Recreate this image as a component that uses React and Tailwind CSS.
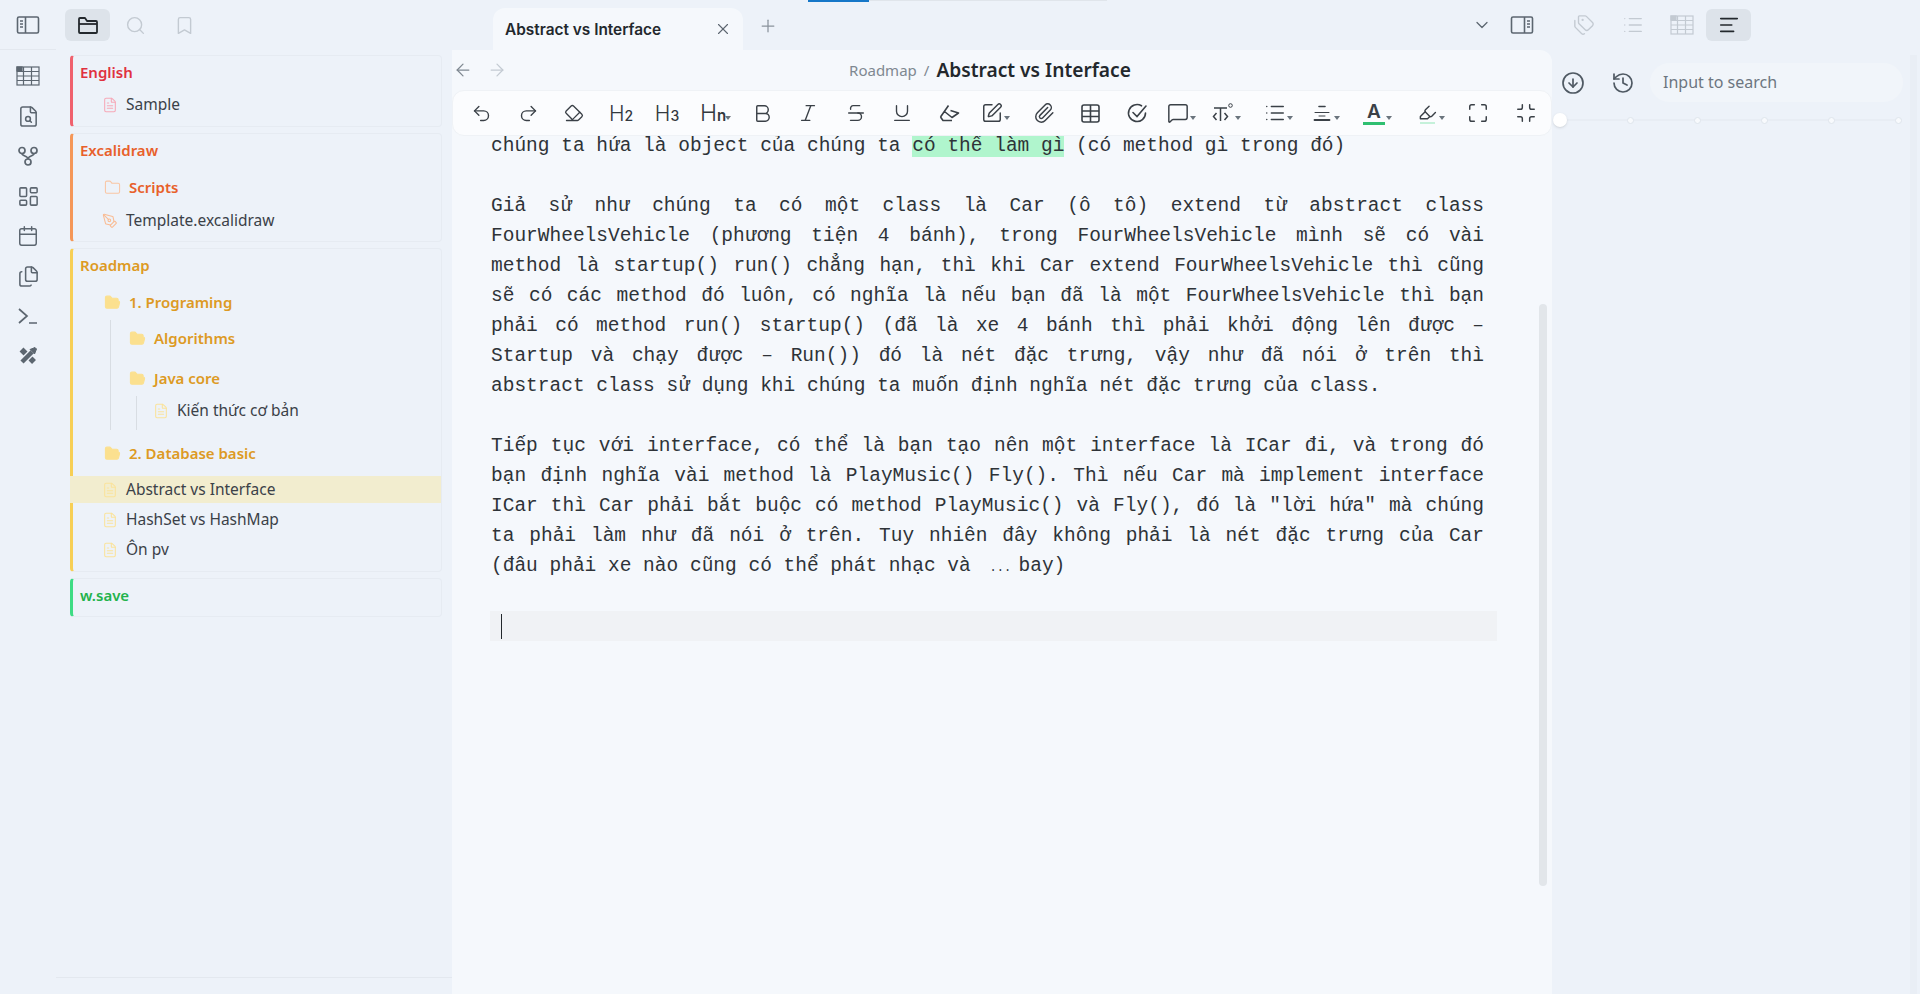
import {
  Undo2, Redo2, Eraser, Bold, Italic, Strikethrough, Underline,
  SquarePen, Paperclip, MessageSquare, List, Highlighter,
  Maximize, Minimize, Folder, FolderOpen, FileText, Search, Bookmark, X, Plus, ChevronDown,
  ArrowLeft, ArrowRight, Tags, LayoutDashboard, Calendar, Files, FileSearch, PenTool,
  CircleArrowDown, History, Text as TextIcon,
} from "lucide-react";

const ui = "font-['Noto_Sans',sans-serif]";

function SheetIcon({ className }) {
  return (
    <svg width="24" height="20" viewBox="0 0 24 20" fill="none" stroke="currentColor" strokeWidth="1.2" className={className}>
      <rect x="1" y="1" width="22" height="18" />
      <rect x="1" y="1" width="5" height="4" fill="currentColor" />
      <path d="M1 5.5h22M1 10h22M1 14.5h22M7.5 1v18M15.5 1v18" />
    </svg>
  );
}

function PanelIcon({ right }) {
  return (
    <svg width="24" height="20" viewBox="0 0 24 20" fill="none" stroke="currentColor" strokeWidth="1.6" className={right ? "-scale-x-100" : ""}>
      <rect x="1.5" y="2" width="21" height="16" rx="1.5" />
      <path d="M9.5 2v16M4 6h3M4 9h3M4 12h3" />
    </svg>
  );
}

function GraphIcon() {
  return (
    <svg width="22" height="22" viewBox="0 0 22 22" fill="none" stroke="currentColor" strokeWidth="1.7">
      <circle cx="5" cy="5.5" r="3" />
      <circle cx="17" cy="5.5" r="3" />
      <circle cx="11" cy="17" r="3" />
      <path d="M5 8.5c0 3 6 2 6 5.5M17 8.5c0 3-6 2-6 5.5" />
    </svg>
  );
}

function ToolsIcon() {
  return (
    <svg width="20" height="20" viewBox="0 0 20 20" fill="none" stroke="currentColor">
      <path d="M3.5 3.5L16 16" strokeWidth="5.5" />
      <path d="M4 16L14 6" strokeWidth="7" stroke="#edf2f9" />
      <path d="M4 16L14 6" strokeWidth="4.5" />
      <path d="M12 3.5l5-2 1.5 1.5-2 5z" fill="currentColor" strokeWidth="1" />
    </svg>
  );
}

function TerminalIcon() {
  return (
    <svg width="22" height="20" viewBox="0 0 22 20" fill="none" stroke="currentColor" strokeWidth="1.7">
      <path d="M2 3l8 7-8 7M12 17h8" />
    </svg>
  );
}

function TextCodeIcon() {
  return (
    <svg width="22" height="22" viewBox="0 0 22 22" fill="none" stroke="currentColor" strokeWidth="1.5">
      <path d="M2 6h13M8.500 6v13M4.500 11l-3 3.500 3 3.500M12.500 11l3 3.500-3 3.500" />
      <circle cx="18.500" cy="3.500" r="1.800" strokeWidth="1" />
    </svg>
  );
}

function InkIcon() {
  return (
    <svg width="21" height="18" viewBox="0 0 21 18" fill="none" stroke="currentColor" strokeWidth="1.6" strokeLinejoin="round">
      <path d="M1.500 13L9.500 1.500M5.500 7.500l7.500 6 6.500-4.500-8-2.500M1.500 13l2.500 3.500h9" />
    </svg>
  );
}

function GridIcon() {
  return (
    <svg width="19" height="19" viewBox="0 0 19 19" fill="none" stroke="currentColor" strokeWidth="1.6">
      <rect x="1" y="1" width="17" height="17" rx="2" />
      <path d="M9.500 1v17M1 7h17M1 12.500h17" />
    </svg>
  );
}

function AlignIcon() {
  return (
    <svg width="18" height="18" viewBox="0 0 18 18" fill="none" stroke="currentColor" strokeLinecap="round">
      <path d="M6 2.500h6" strokeWidth="1.600" />
      <path d="M2 8.500h14" strokeWidth="1" />
      <path d="M6 12h6" strokeWidth="1" />
      <path d="M1.500 16h15" strokeWidth="1.800" />
    </svg>
  );
}

function CheckIcon() {
  return (
    <svg width="22" height="22" viewBox="0 0 22 22" fill="none" stroke="currentColor" strokeWidth="1.6" strokeLinecap="round">
      <path d="M19.500 11a8.500 8.500 0 1 1-4-7.200M7 10.500l4 4L20 4" />
    </svg>
  );
}

function Caret() {
  return <span className="block w-0 h-0 border-x-[3px] border-x-transparent border-t-[4px] border-t-[#6a747d]" />;
}

function HeadingMark({ sub, big }) {
  return (
    <span className="font-['Inter',sans-serif] flex items-baseline leading-none text-[#33393f]">
      <span className={big ? "text-[23px] font-light" : "text-[21px] font-light"}>H</span>
      <span className={big ? "text-[15px] font-semibold" : "text-[14px] font-medium"}>{sub}</span>
    </span>
  );
}

const tools = [
  { ic: <Undo2 size={21} strokeWidth={1.6} />, ml: "ml-0" },
  { ic: <Redo2 size={21} strokeWidth={1.6} />, ml: "ml-[23px]" },
  { ic: <Eraser size={20} strokeWidth={1.6} className="-scale-x-100" />, ml: "ml-[22px]" },
  { ic: <HeadingMark sub="2" />, ml: "ml-[23px]" },
  { ic: <HeadingMark sub="3" />, ml: "ml-[22px]" },
  { ic: <HeadingMark sub="n" big />, ml: "ml-[22px]", caret: true },
  { ic: <Bold size={23} strokeWidth={1.5} />, ml: "ml-[25px]" },
  { ic: <Italic size={22} strokeWidth={1.5} />, ml: "ml-[22px]" },
  { ic: <Strikethrough size={22} strokeWidth={1.5} />, ml: "ml-[24px]" },
  { ic: <Underline size={22} strokeWidth={1.5} />, ml: "ml-[22px]" },
  { ic: <InkIcon />, ml: "ml-[23px]" },
  { ic: <SquarePen size={22} strokeWidth={1.6} />, ml: "ml-[19px]", caret: true },
  { ic: <Paperclip size={22} strokeWidth={1.6} />, ml: "ml-[28px]" },
  { ic: <GridIcon />, ml: "ml-[22px]" },
  { ic: <CheckIcon />, ml: "ml-[23px]" },
  { ic: <MessageSquare size={22} strokeWidth={1.6} />, ml: "ml-[17px]", caret: true },
  { ic: <TextCodeIcon />, ml: "ml-[21px]", caret: true },
  { ic: <List size={22} strokeWidth={1.6} />, ml: "ml-[28px]", caret: true },
  { ic: <AlignIcon />, ml: "ml-[23px]", caret: true },
  {
    ic: (
      <span className="flex flex-col items-center leading-none">
        <span className="font-['Inter',sans-serif] text-[19px] font-semibold leading-[20px]">A</span>
        <span className="w-[22px] h-[3px] bg-[#2fbf71]" />
      </span>
    ),
    ml: "ml-[28px]",
    caret: true,
  },
  {
    ic: (
      <span className="flex flex-col items-center">
        <Highlighter size={19} strokeWidth={1.8} />
        <span className="w-[15px] h-[2px] bg-[#c5f1da]" />
      </span>
    ),
    ml: "ml-[29px]",
    caret: true,
  },
  { ic: <Maximize size={22} strokeWidth={1.6} />, ml: "ml-[27px]" },
  { ic: <Minimize size={22} strokeWidth={1.6} />, ml: "ml-[24px]" },
];

function FileRow({ icon: Icon = FileText, color, name, pl, h = "h-[30px]", active }) {
  return (
    <div className={`flex items-center gap-[8px] text-[15.5px] text-[#3b4148] ${pl} ${h} ${active ? "-ml-[3px] bg-[#f2edcf]" : ""}`}>
      <Icon size={16} strokeWidth={1.6} className={color} />
      <span>{name}</span>
    </div>
  );
}

function FolderRow({ icon: Icon = FolderOpen, iconClass, name, text, pl, h = "h-[37px]", extra = "" }) {
  return (
    <div className={`flex items-center gap-2 text-[15px] font-semibold ${text} ${pl} ${h} ${extra}`}>
      <Icon size={17} strokeWidth={1.5} className={iconClass} />
      <span>{name}</span>
    </div>
  );
}

function Card({ bar, title, color, children }) {
  return (
    <div className={`rounded-[4px] border border-[#e6ebf2] border-l-[3px] ${bar} mb-[6px]`}>
      <div className={`h-[34px] pb-[2px] flex items-center pl-[7px] text-[15px] font-semibold ${color}`}>{title}</div>
      {children}
    </div>
  );
}

export default function App() {
  const yellowFolder = "text-[#fbe08f] fill-[#fbe08f]";
  return (
    <div className={`${ui} relative w-full h-[994px] overflow-hidden flex bg-[#edf2f9] text-[#2e3338]`}>
      {/* progress strip */}
      <div className="absolute top-0 left-[808px] w-[61px] h-[2px] bg-[#1677c8]" />
      <div className="absolute top-0 left-[869px] w-[238px] h-[1px] bg-[#e0e5eb]" />

      {/* ribbon */}
      <div className="w-[56px] shrink-0 text-[#5c6670]">
        <div className="h-[50px] border-b border-[#e3e8ef] flex items-center justify-center"><PanelIcon /></div>
        <div className="flex flex-col items-center pt-[6px]">
          {[
            <SheetIcon />,
            <FileSearch size={23} strokeWidth={1.6} />,
            <GraphIcon />,
            <LayoutDashboard size={23} strokeWidth={1.6} />,
            <Calendar size={22} strokeWidth={1.6} />,
            <Files size={23} strokeWidth={1.6} />,
            <TerminalIcon />,
            <ToolsIcon />,
          ].map((ic, i) => (
            <div key={i} className="h-10 flex items-center justify-center">{ic}</div>
          ))}
        </div>
      </div>

      {/* file sidebar */}
      <div className="w-[396px] shrink-0 relative">
        <div className="h-[50px] flex items-start pt-[9px] pl-[9px] text-[#c3cad2]">
          <div className="w-[45px] h-8 rounded-md bg-[#dde3ea] flex items-center justify-center text-[#23282d]">
            <FolderClosedIcon />
          </div>
          <div className="w-[49px] h-8 ml-[1px] flex items-center justify-center"><Search size={21} strokeWidth={1.6} /></div>
          <div className="w-[49px] h-8 flex items-center justify-center"><Bookmark size={21} strokeWidth={1.6} /></div>
        </div>
        <div className="pt-[5px] pl-[14px] pr-[10px]">
          <Card bar="border-l-[#f0616d]" title="English" color="text-[#e0313f]">
            <FileRow color="text-[#f6a9b8]" name="Sample" pl="pl-[29px]" />
            <div className="h-[6px]" />
          </Card>
          <Card bar="border-l-[#f59758]" title="Excalidraw" color="text-[#e8602a]">
            <FolderRow icon={Folder} iconClass="text-[#f9c6a4]" name="Scripts" text="text-[#e8602a]" pl="pl-[31px]" h="h-[38px]" />
            <FileRow icon={PenTool} color="text-[#f9bc94]" name="Template.excalidraw" pl="pl-[29px]" />
            <div className="h-[5px]" />
          </Card>
          <Card bar="border-l-[#f7cf55]" title="Roadmap" color="text-[#dd9a24]">
            <FolderRow iconClass={yellowFolder} name="1. Programing" text="text-[#dd9a24]" pl="pl-[31px]" extra="mt-[1px]" />
            <div className="ml-[37px] -mt-[1px] border-l border-[#d8dde3]">
              <FolderRow iconClass={yellowFolder} name="Algorithms" text="text-[#dd9a24]" pl="pl-[18px]" />
              <FolderRow iconClass={yellowFolder} name="Java core" text="text-[#dd9a24]" pl="pl-[18px]" h="h-[36px]" extra="mt-[3px]" />
              <div className="ml-[25px] border-l border-[#d8dde3] pb-[4px]">
                <FileRow color="text-[#fae39c]" name="Kiến thức cơ bản" pl="pl-[16px]" />
              </div>
            </div>
            <FolderRow iconClass={yellowFolder} name="2. Database basic" text="text-[#dd9a24]" pl="pl-[31px]" extra="mt-[5px]" />
            <div className="mt-[4px]">
              <FileRow color="text-[#fae39c]" name="Abstract vs Interface" pl="pl-[32px]" h="h-[27px]" active />
            </div>
            <div className="mt-[2px]">
              <FileRow color="text-[#fae39c]" name="HashSet vs HashMap" pl="pl-[29px]" />
              <FileRow color="text-[#fae39c]" name="Ôn pv" pl="pl-[29px]" />
            </div>
            <div className="h-[6px]" />
          </Card>
          <Card bar="border-l-[#3edc84]" title="w.save" color="text-[#22b24c]">
            <div className="h-[3px]" />
          </Card>
        </div>
        <div className="absolute left-0 right-0 top-[977px] h-px bg-[#e3e8ef]" />
      </div>

      {/* main editor */}
      <div className="w-[1100px] shrink-0 flex flex-col">
        <div className="h-[50px] shrink-0 flex items-end pl-[41px] pr-[18px]">
          <div className="w-[250px] h-[42px] rounded-t-xl bg-[#f5f8fc] flex items-center justify-between pl-3 pr-[11px]">
            <span className="font-['Inter',sans-serif] text-[15.4px] font-semibold text-[#23282d] pt-[1px]">Abstract vs Interface</span>
            <X size={18} strokeWidth={1.5} className="text-[#5c6670]" />
          </div>
          <div className="ml-[15px] h-[42px] flex items-start pt-[8px] text-[#8a939c]"><Plus size={20} strokeWidth={1.5} /></div>
          <div className="ml-auto h-full flex items-center gap-[18px] text-[#5c6670]">
            <ChevronDown size={20} strokeWidth={1.5} />
            <PanelIcon right />
          </div>
        </div>
        <div className="flex-1 min-h-0 relative bg-[#f5f8fc] rounded-tr-xl flex flex-col">
          <div className="h-10 shrink-0 relative flex items-center justify-center pr-[24px]">
            <div className="absolute left-[1px] flex items-center gap-[14px]">
              <ArrowLeft size={20} strokeWidth={1.5} className="text-[#7f8891]" />
              <ArrowRight size={20} strokeWidth={1.5} className="text-[#c3cad2]" />
            </div>
            <span className="text-[15px] text-[#7f8891]">Roadmap</span>
            <span className="text-[15px] text-[#7f8891] mx-[7px]">/</span>
            <span className="text-[19.2px] font-semibold text-[#23282d]">Abstract vs Interface</span>
          </div>
          <div className="h-[46px] shrink-0 relative z-10 bg-[#fbfcfe] rounded-xl flex items-center pl-[16px] text-[#3a4047] border border-[#eff2f6]">
            {tools.map((t, i) => (
              <span key={i} className={`w-6 h-6 shrink-0 flex items-center justify-center relative ${t.ml}`}>
                {t.ic}
                {t.caret && <span className="absolute -right-[6px] top-[15px]"><Caret /></span>}
              </span>
            ))}
          </div>
          <div className="flex-1 min-h-0 overflow-hidden pl-[39px] -mt-[5px] font-['Liberation_Mono',monospace] text-[19.5px] leading-[30px] text-[#2e3338]">
            <div className="w-[993px] text-justify">
              <p>chúng ta hứa là object của chúng ta <mark className="bg-[#b0f5cd] text-[#2e3338]">có thể làm gì</mark> (có method gì trong đó)</p>
              <p className="h-[30px]" />
              <p>Giả sử như chúng ta có một class là Car (ô tô) extend từ abstract class FourWheelsVehicle (phương tiện 4 bánh), trong FourWheelsVehicle mình sẽ có vài method là startup() run() chẳng hạn, thì khi Car extend FourWheelsVehicle thì cũng sẽ có các method đó luôn, có nghĩa là nếu bạn đã là một FourWheelsVehicle thì bạn phải có method run() startup() (đã là xe 4 bánh thì phải khởi động lên được – Startup và chạy được – Run()) đó là nét đặc trưng, vậy như đã nói ở trên thì abstract class sử dụng khi chúng ta muốn định nghĩa nét đặc trưng của class.</p>
              <p className="h-[30px]" />
              <p>Tiếp tục với interface, có thể là bạn tạo nên một interface là ICar đi, và trong đó bạn định nghĩa vài method là PlayMusic() Fly(). Thì nếu Car mà implement interface ICar thì Car phải bắt buộc có method PlayMusic() và Fly(), đó là "lời hứa" mà chúng ta phải làm như đã nói ở trên. Tuy nhiên đây không phải là nét đặc trưng của Car (đâu phải xe nào cũng có thể phát nhạc và{"\u00a0"}<span className="inline-block w-[29px] ml-[7px] text-[12px] leading-none">...</span>bay)</p>
              <p className="h-[30px]" />
            </div>
            <div className="w-[1007px] -ml-px h-[30px] bg-[#f0f2f5] flex items-center pl-[11px]">
              <span className="w-px h-[25px] bg-[#23282d]" />
            </div>
          </div>
          {/* editor scrollbar */}
          <div className="absolute left-[1087px] top-[254px] w-[8px] h-[582px] rounded-sm bg-[#e2e6ea]" />
        </div>
      </div>

      {/* right panel */}
      <div className="flex-1 min-w-0 relative">
        <div className="h-[50px] flex items-start pt-[9px] pl-[7px] text-[#c3cad2]">
          <div className="w-[49px] h-8 flex items-center justify-center"><Tags size={22} strokeWidth={1.5} /></div>
          <div className="w-[49px] h-8 flex items-center justify-center"><List size={22} strokeWidth={1.5} /></div>
          <div className="w-[49px] h-8 flex items-center justify-center"><SheetIcon /></div>
          <div className="w-[45px] h-8 rounded-md bg-[#dde3ea] flex items-center justify-center text-[#23282d]"><TextIcon size={22} strokeWidth={1.8} /></div>
        </div>
        <div className="flex items-center h-[39px] mt-[13px] pl-[9px] text-[#4f5963]">
          <CircleArrowDown size={24} strokeWidth={1.7} />
          <History size={24} strokeWidth={1.7} className="ml-[26px]" />
          <div className="ml-[15px] w-[253px] h-[39px] rounded-full bg-[#f1f5fa] pl-[13px] pb-[2px] flex items-center text-[16px] text-[#6d7680]">Input to search</div>
        </div>
        <div className="relative mt-[11px] h-[14px] ml-[1px] w-[349px] flex items-center justify-between">
          <div className="absolute left-0 right-0 top-[6px] h-[2px] bg-[#e8edf4]" />
          <span className="relative w-[14px] h-[14px] rounded-full bg-white shadow-sm" />
          {[0, 1, 2, 3, 4].map((i) => (
            <span key={i} className="relative w-[7px] h-[7px] rounded-full bg-[#f8fafd] border border-[#dfe5ec]" />
          ))}
        </div>
        <div className="absolute left-[358px] top-[55px] bottom-0 w-[7px] bg-[#e9eef5]" />
      </div>
    </div>
  );
}

function FolderClosedIcon() {
  return (
    <svg width="22" height="19" viewBox="0 0 22 19" fill="none" stroke="currentColor" strokeWidth="1.8" strokeLinejoin="round">
      <path d="M2 3a1 1 0 0 1 1-1h5l2 3h9a1 1 0 0 1 1 1v10a1 1 0 0 1-1 1H3a1 1 0 0 1-1-1V3z" />
      <path d="M2 8h18" />
    </svg>
  );
}
